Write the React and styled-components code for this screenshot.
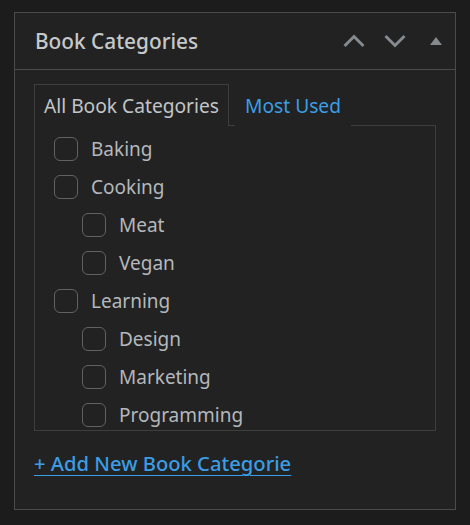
import styled, { createGlobalStyle } from "styled-components";

const GlobalStyle = createGlobalStyle`
  html, body {
    margin: 0;
    background: #1c1c1c;
  }
  body {
    font-family: "Noto Sans", "Open Sans", sans-serif;
  }
`;

const Page = styled.div`
  padding: 12px 14px;
  width: 442px;
`;

const Panel = styled.div`
  border: 1px solid #4b4b4b;
  background: #222222;
  height: 498px;
  box-sizing: border-box;
`;

const Header = styled.div`
  height: 56px;
  display: flex;
  align-items: center;
  justify-content: space-between;
  padding: 0 6px 0 20px;
  border-bottom: 1px solid #4b4b4b;
`;

const Title = styled.h2`
  margin: 0;
  font-size: 20.8px;
  font-weight: 500;
  color: #c6c9cc;
`;

const Controls = styled.div`
  display: flex;
  align-items: center;
  gap: 15px;
`;

const IconButton = styled.button`
  background: none;
  border: 0;
  padding: 0;
  width: 26px;
  height: 26px;
  display: flex;
  align-items: center;
  justify-content: center;
  color: #858a8f;
  cursor: pointer;
`;

const Body = styled.div`
  padding: 14px 19px 0 19px;
`;

const Tabs = styled.div`
  display: flex;
  align-items: stretch;
`;

const Tab = styled.div`
  height: 42px;
  box-sizing: border-box;
  padding: 0 9px;
  display: flex;
  align-items: center;
  font-size: 19.2px;
  color: ${(p) => (p.active ? "#c2c5c8" : "#3b9de4")};
  border: 1px solid ${(p) => (p.active ? "#3e3e3e" : "transparent")};
  border-bottom: 0;
  margin-bottom: -1px;
  background: #222222;
  position: relative;
  z-index: 1;
  margin-right: 6px;
`;

const TabPanel = styled.div`
  border: 1px solid #3e3e3e;
  height: 306px;
  box-sizing: border-box;
  padding: 4px 0 0 19px;
  width: 402px;
  overflow: hidden;
`;

const List = styled.ul`
  list-style: none;
  margin: 0;
  padding: 0;
`;

const Item = styled.li`
  height: 38px;
  display: flex;
  align-items: center;
  padding-left: ${(p) => (p.level ? p.level * 28 : 0)}px;
`;

const Box = styled.span`
  width: 24px;
  height: 24px;
  border: 1px solid #5f6265;
  border-radius: 6px;
  box-sizing: border-box;
  margin-right: 13px;
  flex-shrink: 0;
`;

const Label = styled.span`
  font-size: 19px;
  color: #b4b8bc;
`;

const AddLink = styled.a`
  display: inline-block;
  margin-top: 18px;
  font-size: 20.2px;
  font-weight: 500;
  color: #3b9de4;
  text-decoration: underline;
  text-underline-offset: 4px;
  text-decoration-thickness: 1px;
  cursor: pointer;
`;

const categories = [
  { name: "Baking", level: 0 },
  { name: "Cooking", level: 0 },
  { name: "Meat", level: 1 },
  { name: "Vegan", level: 1 },
  { name: "Learning", level: 0 },
  { name: "Design", level: 1 },
  { name: "Marketing", level: 1 },
  { name: "Programming", level: 1 },
];

const Chevron = ({ up }) => (
  <svg width="22" height="14" viewBox="0 0 22 14" fill="none">
    <path
      d={up ? "M1.5 12 L11 2.5 L20.5 12" : "M1.5 2 L11 11.5 L20.5 2"}
      stroke="currentColor"
      strokeWidth="3"
    />
  </svg>
);

const Triangle = () => (
  <svg width="14" height="10" viewBox="0 0 14 10">
    <path d="M7 1 L13 9 L1 9 Z" fill="currentColor" />
  </svg>
);

const App = () => {
  return (
    <Page>
      <GlobalStyle />
      <Panel>
        <Header>
          <Title>Book Categories</Title>
          <Controls>
            <IconButton>
              <Chevron up />
            </IconButton>
            <IconButton>
              <Chevron />
            </IconButton>
            <IconButton>
              <Triangle />
            </IconButton>
          </Controls>
        </Header>
        <Body>
          <Tabs>
            <Tab active>All Book Categories</Tab>
            <Tab>Most Used</Tab>
          </Tabs>
          <TabPanel>
            <List>
              {categories.map((c) => (
                <Item key={c.name} level={c.level}>
                  <Box />
                  <Label>{c.name}</Label>
                </Item>
              ))}
            </List>
          </TabPanel>
          <AddLink>+ Add New Book Categorie</AddLink>
        </Body>
      </Panel>
    </Page>
  );
};

export default App;
